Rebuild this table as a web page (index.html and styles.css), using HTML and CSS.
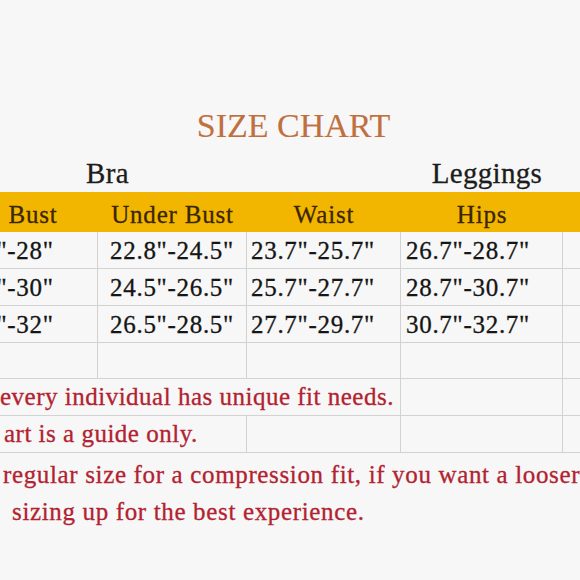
FILE: index.html
```html
<!DOCTYPE html>
<html lang="en">
<head>
<meta charset="utf-8">
<title>Size Chart</title>
<link rel="stylesheet" href="styles.css">
</head>
<body>
<main class="sheet">
  <h1 class="title">SIZE CHART</h1>
  <div class="chart">
    <div class="group span2">Bra</div>
    <div class="group"></div>
    <div class="group legs">Leggings</div>
    <div class="group"></div>

    <div class="head">Bust</div>
    <div class="head">Under Bust</div>
    <div class="head">Waist</div>
    <div class="head">Hips</div>
    <div class="head"></div>

    <div class="cell c1">26"-28"</div>
    <div class="cell c2">22.8"-24.5"</div>
    <div class="cell c3">23.7"-25.7"</div>
    <div class="cell c4">26.7"-28.7"</div>
    <div class="cell c5"></div>

    <div class="cell c1">28"-30"</div>
    <div class="cell c2">24.5"-26.5"</div>
    <div class="cell c3">25.7"-27.7"</div>
    <div class="cell c4">28.7"-30.7"</div>
    <div class="cell c5"></div>

    <div class="cell c1">30"-32"</div>
    <div class="cell c2">26.5"-28.5"</div>
    <div class="cell c3">27.7"-29.7"</div>
    <div class="cell c4">30.7"-32.7"</div>
    <div class="cell c5"></div>

    <div class="cell c1"></div>
    <div class="cell c2"></div>
    <div class="cell c3"></div>
    <div class="cell c4"></div>
    <div class="cell c5"></div>

    <div class="cell note span3 note-every">every individual has unique fit needs.</div>
    <div class="cell c4"></div>
    <div class="cell c5"></div>

    <div class="cell note span2 note-guide">art is a guide only.</div>
    <div class="cell c3"></div>
    <div class="cell c4"></div>
    <div class="cell c5"></div>
  </div>
  <p class="note-line">regular size for a compression fit, if you want a looser</p>
  <p class="note-line second">sizing up for the best experience.</p>
</main>
</body>
</html>
```
FILE: styles.css
```css
html, body {
  margin: 0;
  background: #f7f7f7;
  overflow: hidden;
}

body {
  font-family: "Liberation Serif", "Times New Roman", serif;
  -webkit-text-stroke: 0.3px currentColor;
}

.sheet {
  width: 580px;
  height: 580px;
  padding-top: 106px;
  box-sizing: border-box;
  overflow: hidden;
}

.title {
  margin: 0 0 6px;
  padding-left: 7px;
  text-align: center;
  font-weight: normal;
  font-size: 34px;
  line-height: 40px;
  color: #c0703f;
  -webkit-text-stroke: 0.1px currentColor;
}

.chart {
  display: grid;
  grid-template-columns: 130px 149px 154px 162px 118px;
  grid-template-rows: 40px 40px 37px 37px 37px 36px 37px 37px;
  width: 713px;
  margin-left: -32px;
  font-size: 25px;
  letter-spacing: 0.7px;
  color: #151515;
}

.group {
  font-size: 29px;
  letter-spacing: 0.3px;
  line-height: 40px;
  padding-top: 1px;
  text-align: center;
  color: #1c1c1c;
}

.span2 { grid-column: span 2; }
.span3 { grid-column: span 3; }

.legs { padding-left: 10px; }

.head {
  background: #f3b600;
  color: #3a2600;
  font-size: 25px;
  letter-spacing: 0.8px;
  text-align: center;
  line-height: 34px;
  padding-top: 6px;
  box-sizing: border-box;
}

.cell {
  box-sizing: border-box;
  border-right: 1px solid #d2d2d2;
  border-bottom: 1px solid #d2d2d2;
  line-height: 30px;
  padding-top: 4px;
  white-space: nowrap;
}

.c1 { padding-left: 2px; }
.c2 { text-align: center; }
.c3 { padding-left: 4px; }
.c4 { padding-left: 5px; }
.c5 { border-right: 0; }

.note {
  color: #b22230;
  letter-spacing: 0.5px;
  padding-top: 3px;
}

.note-every { padding-left: 32px; }
.note-guide { padding-left: 36px; }

.note-line {
  margin: 0;
  padding: 3px 0 0 3px;
  font-size: 25px;
  line-height: 37px;
  letter-spacing: 0.65px;
  color: #b22230;
  white-space: nowrap;
}

.note-line.second {
  padding: 0 0 0 12px;
}
```
